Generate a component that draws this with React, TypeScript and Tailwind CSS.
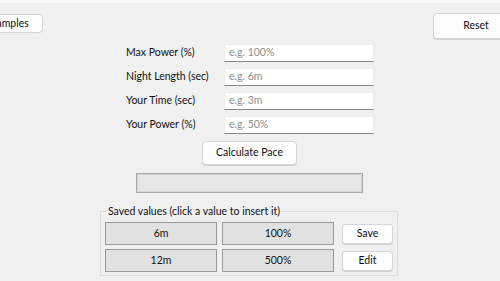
import React from "react";

const fields = [
  { label: "Max Power (%)", placeholder: "e.g. 100%" },
  { label: "Night Length (sec)", placeholder: "e.g. 6m" },
  { label: "Your Time (sec)", placeholder: "e.g. 3m" },
  { label: "Your Power (%)", placeholder: "e.g. 50%" },
];

const saved = [
  ["6m", "100%", "Save"],
  ["12m", "500%", "Edit"],
];

const App = () => {
  return (
    <div
      className="w-[500px] h-[281px] overflow-hidden bg-[#f0f0f0] text-[#111111] text-[10.5px]"
      style={{ fontFamily: "Lato, 'Liberation Sans', sans-serif" }}
    >
      <div className="h-[3px] bg-[#f5f7f9]" />

      {/* === Header buttons === */}
      <div className="flex justify-between items-start h-[41px]">
        <button className="ml-[-29px] mt-[11px] h-[19px] w-[72px] bg-white border border-[#d3d3d3] rounded-[4px]">
          Examples
        </button>
        <button className="mr-[-19px] mt-[10px] h-[26px] w-[86px] bg-[#fdfdfd] border border-[#d3d3d3] rounded-[4px] shadow-[0_1px_0_#d6d6d6]">
          Reset
        </button>
      </div>

      {/* === Inputs === */}
      <div className="pl-[126px] grid grid-cols-[98px_150px] gap-y-[6px]">
        {fields.map((f) => (
          <React.Fragment key={f.label}>
            <div className="h-[18px] flex items-center">{f.label}</div>
            <div className="h-[18px] bg-white border border-[#ececec] border-b-[#8a8a8a] flex items-center px-[4px] text-[#8d8d8d]">
              {f.placeholder}
            </div>
          </React.Fragment>
        ))}
      </div>

      <button className="ml-[202px] mt-[7px] w-[95px] h-[24px] bg-[#fdfdfd] border border-[#d6d6d6] rounded-[4px] shadow-[0_1px_0_#d0d0d0] flex items-center justify-center">
        Calculate Pace
      </button>

      <div className="ml-[136px] mt-[8px] w-[227px] h-[20px] bg-[#e6e6e6] border border-[#a9a9a9] shadow-[inset_0_0_0_1px_#d4d4d4]" />

      {/* === Saved values === */}
      <div className="relative ml-[100px] mt-[18px] w-[298px] h-[65px] border border-[#dcdcdc] px-[4px] pt-[10px] flex flex-col gap-[4px]">
        <span className="absolute top-[-8px] left-[6px] px-[1px] bg-[#f0f0f0] leading-[14px]">
          Saved values (click a value to insert it)
        </span>
        {saved.map(([a, b, action]) => (
          <div key={a} className="flex items-center">
            <div className="w-[112px] h-[23px] bg-[#e1e1e1] border border-[#999999] flex items-center justify-center">
              {a}
            </div>
            <div className="ml-[5px] w-[112px] h-[23px] bg-[#e1e1e1] border border-[#999999] flex items-center justify-center">
              {b}
            </div>
            <button className="ml-[8px] w-[51px] h-[20px] bg-[#fdfdfd] border border-[#d6d6d6] rounded-[3px] shadow-[0_1px_0_#d0d0d0]">
              {action}
            </button>
          </div>
        ))}
      </div>
    </div>
  );
};

export default App;
